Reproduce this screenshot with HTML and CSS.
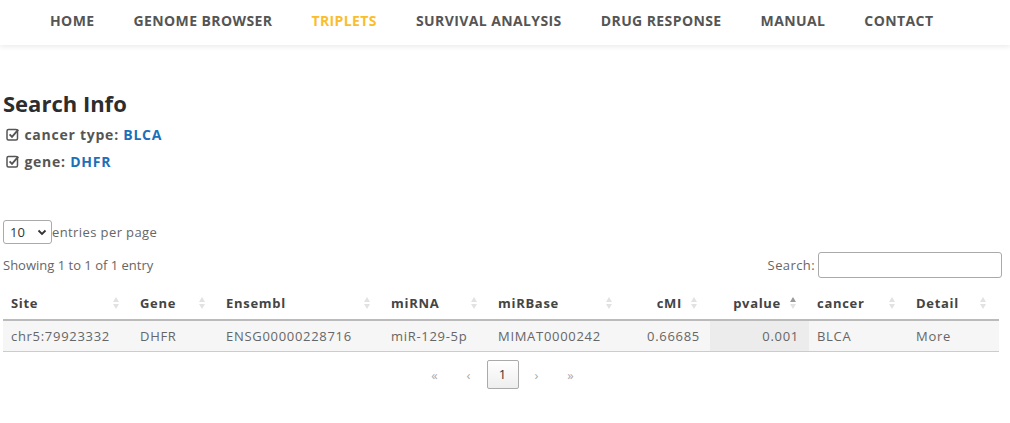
FILE: index.html
```html
<!DOCTYPE html>
<html>
<head>
  <title>Triplets</title>
  <link rel="stylesheet" href="styles.css">
</head>
<body>
  <nav class="topnav">
    <a href="#">HOME</a>
    <a href="#">GENOME BROWSER</a>
    <a href="#" class="active">TRIPLETS</a>
    <a href="#">SURVIVAL ANALYSIS</a>
    <a href="#">DRUG RESPONSE</a>
    <a href="#">MANUAL</a>
    <a href="#">CONTACT</a>
  </nav>

  <div class="content">
    <h2>Search Info</h2>
    <p class="info">
      <svg class="chk" width="14" height="14" viewBox="0 0 14 14"><rect x="1" y="2.5" width="10.5" height="10.5" rx="1.5" fill="none" stroke="#555" stroke-width="1.5"/><path d="M3.6 7.3 L6 9.8 L12.3 2.6" fill="none" stroke="#555" stroke-width="1.9"/></svg>
      cancer type: <span class="val">BLCA</span>
    </p>
    <p class="info">
      <svg class="chk" width="14" height="14" viewBox="0 0 14 14"><rect x="1" y="2.5" width="10.5" height="10.5" rx="1.5" fill="none" stroke="#555" stroke-width="1.5"/><path d="M3.6 7.3 L6 9.8 L12.3 2.6" fill="none" stroke="#555" stroke-width="1.9"/></svg>
      gene: <span class="val">DHFR</span>
    </p>

    <div class="len">
      <div class="sel">10
        <svg width="10" height="7" viewBox="0 0 10 7"><path d="M1.5 1.5 L5 5 L8.5 1.5" fill="none" stroke="#333" stroke-width="1.8"/></svg>
      </div>
      <span>entries per page</span>
    </div>

    <div class="bar">
      <span class="count">Showing 1 to 1 of 1 entry</span>
      <label>Search: <span class="search"></span></label>
    </div>

    <table class="dt">
      <thead>
        <tr>
          <th class="c-site">Site<i class="sort"></i></th>
          <th class="c-gene">Gene<i class="sort"></i></th>
          <th class="c-ens">Ensembl<i class="sort"></i></th>
          <th class="c-mir">miRNA<i class="sort"></i></th>
          <th class="c-mb">miRBase<i class="sort"></i></th>
          <th class="c-cmi num">cMI<i class="sort"></i></th>
          <th class="c-pv num">pvalue<i class="sort asc"></i></th>
          <th class="c-can">cancer<i class="sort"></i></th>
          <th class="c-det">Detail<i class="sort"></i></th>
        </tr>
      </thead>
      <tbody>
        <tr>
          <td>chr5:79923332</td>
          <td>DHFR</td>
          <td>ENSG00000228716</td>
          <td>miR-129-5p</td>
          <td>MIMAT0000242</td>
          <td class="num">0.66685</td>
          <td class="num sorted">0.001</td>
          <td>BLCA</td>
          <td>More</td>
        </tr>
      </tbody>
    </table>

    <div class="pager">
      <span>&laquo;</span>
      <span>&lsaquo;</span>
      <span class="cur">1</span>
      <span>&rsaquo;</span>
      <span>&raquo;</span>
    </div>
  </div>
</body>
</html>
```

FILE: styles.css
```css
body { margin: 0; font-family: "Open Sans", sans-serif; color: #666; background: #fff; }

.topnav { height: 45px; box-sizing: border-box; padding: 0 0 4px 50px; display: flex; align-items: center; gap: 39px; box-shadow: 0 2px 5px rgba(0,0,0,0.08); }
.topnav a { color: #555; text-decoration: none; font-weight: 700; font-size: 14px; letter-spacing: 0.4px; }
.topnav a.active { color: #fbbd2d; }

.content { padding: 0 8px 0 3px; }
h2 { margin: 44px 0 4px; font-size: 22px; font-weight: 700; color: #2d2d2d; line-height: 28px; }
.info { margin: 0; line-height: 27px; font-size: 14px; font-weight: 700; color: #555; letter-spacing: 0.75px; padding-left: 3px; }
.info .chk { vertical-align: -1px; margin-right: 0; }
.info .val { color: #1d6fb8; }

.len { display: flex; align-items: center; margin-top: 45px; font-size: 13px; letter-spacing: 0.4px; }
.sel { box-sizing: border-box; width: 49px; height: 24px; border: 1px solid #aaa; border-radius: 3px; display: flex; align-items: center; justify-content: space-between; padding: 0 4px 0 6px; color: #333; letter-spacing: 0; }

.bar { display: flex; justify-content: space-between; align-items: center; margin-top: 8px; font-size: 13px; letter-spacing: 0.4px; }
.bar .count { letter-spacing: 0; }
.bar label { display: flex; align-items: center; gap: 3px; }
.search { display: block; box-sizing: border-box; width: 184px; height: 26px; border: 1px solid #aaa; border-radius: 3px; }

.dt { border-collapse: collapse; margin-top: 12px; width: 996px; font-size: 13px; letter-spacing: 0.7px; }
.dt th { position: relative; text-align: left; font-weight: 700; color: #444; height: 30px; padding: 0 28px 3px 8px; border-bottom: 2px solid #bbb; box-sizing: border-box; }
.dt td { height: 30px; padding: 0 10px 0 8px; background: #f6f6f6; border-bottom: 1px solid #ccc; }
.dt .num { text-align: right; }
.dt td.sorted { background: #ececec; }
.c-site { width: 129px; }
.c-gene { width: 86px; }
.c-ens { width: 165px; }
.c-mir { width: 107px; }
.c-mb { width: 135px; }
.c-cmi { width: 85px; }
.c-pv { width: 99px; }
.c-can { width: 99px; }

.sort { position: absolute; right: 12px; top: 7px; width: 7px; height: 12px; }
.sort::before, .sort::after { content: ""; position: absolute; left: 0; border-left: 3.5px solid transparent; border-right: 3.5px solid transparent; }
.sort::before { top: 0; border-bottom: 5px solid #e2e2e2; }
.sort::after { bottom: 0; border-top: 5px solid #e2e2e2; }
.sort.asc::before { border-bottom-color: #999; }

.pager { display: flex; justify-content: center; align-items: center; margin-top: 8px; font-size: 13px; color: #aaa; padding-left: 0; }
.pager span { width: 34px; text-align: center; }
.pager .cur { box-sizing: border-box; width: 32px; height: 29px; line-height: 27px; margin: 0 1px; border: 1px solid #aaa; border-radius: 2px; background: linear-gradient(#fff, #eee); color: #333; }
```
